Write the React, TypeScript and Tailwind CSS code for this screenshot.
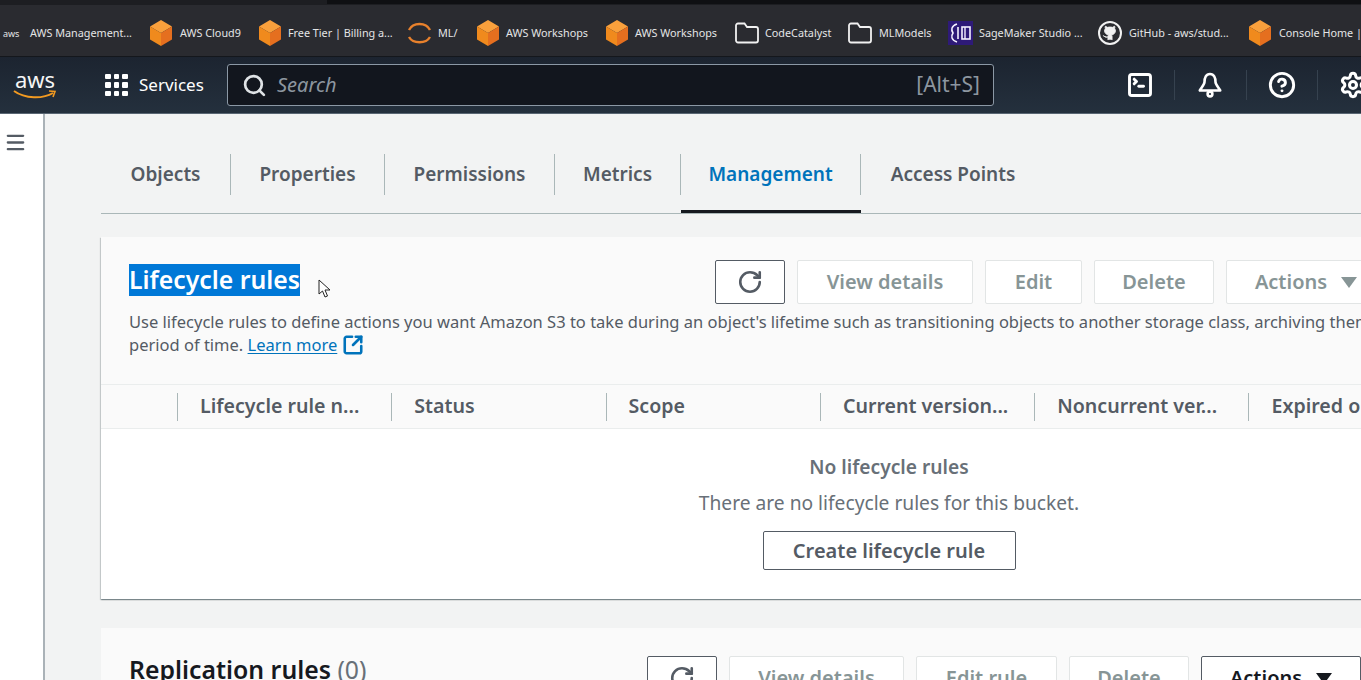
import { CircleHelp, Github, Menu, RotateCw, Search, Settings, SquareArrowOutUpRight, SquareTerminal } from "lucide-react";

function Cube() {
  return (
    <svg width="24" height="26" viewBox="0 0 24 26" className="shrink-0">
      <path d="M12 0 L23 6.5 L12 13 L1 6.5 Z" fill="#f9a03c" />
      <path d="M1 6.5 L12 13 L12 26 L1 19.5 Z" fill="#f08a1d" />
      <path d="M23 6.5 L12 13 L12 26 L23 19.5 Z" fill="#e56f1f" />
    </svg>
  );
}

function Folder() {
  return (
    <svg width="24" height="22" viewBox="0 0 24 22" fill="none" stroke="#f1f1f1" strokeWidth="1.8" className="shrink-0">
      <path d="M3 1.5 H9.5 L12 5 H21 A2 2 0 0 1 23 7 V18.5 A2 2 0 0 1 21 20.5 H3 A2 2 0 0 1 1 18.5 V3.5 A2 2 0 0 1 3 1.5 Z" />
    </svg>
  );
}

function MlArc() {
  return (
    <svg width="25" height="24" viewBox="0 0 25 24" fill="none" stroke="#e8812c" strokeWidth="2.4" className="shrink-0">
      <path d="M2 9 C6 1 19 1 23 9" />
      <path d="M2 16 C6 23 19 23 23 16" />
    </svg>
  );
}

function SageMaker() {
  return (
    <svg width="25" height="24" viewBox="0 0 25 24" fill="none" className="shrink-0">
      <rect width="25" height="24" fill="#2e1a78" />
      <path d="M9 3 C3 5 3 9 5 12 C3 15 3 19 9 21" stroke="#f4f0ff" strokeWidth="1.6" />
      <path d="M10 6 V18" stroke="#f4f0ff" strokeWidth="1.6" />
      <rect x="14" y="6" width="8" height="12" stroke="#f4f0ff" strokeWidth="1.6" />
      <path d="M17 6 V18" stroke="#f4f0ff" strokeWidth="1.4" />
    </svg>
  );
}

function GitHubMark() {
  return (
    <span className="flex h-[24px] w-[24px] shrink-0 items-center justify-center rounded-full border-2 border-[#f1f1f1] text-[#f1f1f1]">
      <Github size={16} fill="currentColor" strokeWidth={1.5} />
    </span>
  );
}

function BellIcon() {
  return (
    <svg width="24" height="26" viewBox="0 0 24 26" fill="none" stroke="white" strokeWidth="2.6" className="ml-[23px] shrink-0">
      <path d="M12 2 C8 2 6.5 5.5 6.5 10 C6.5 12.5 3.5 15.5 1.8 18.5 H22.2 C20.5 15.5 17.5 12.5 17.5 10 C17.5 5.5 16 2 12 2 Z" strokeLinejoin="round" />
      <circle cx="12" cy="22" r="2.4" />
    </svg>
  );
}

function Bookmark({ icon, label, className }: { icon: React.ReactNode; label: string; className: string }) {
  return (
    <div className={`flex shrink-0 items-center ${className}`}>
      {icon}
      <span className="whitespace-nowrap text-[10.8px] text-[#e4e5e6]">{label}</span>
    </div>
  );
}

function BookmarkBar() {
  return (
    <div className="flex h-[52px] items-center overflow-hidden border-b border-[#14171c] bg-[#2a2b30] pl-[3px] pt-[5px]">
      <Bookmark
        className="w-[146px] gap-[11px]"
        label="AWS Management..."
        icon={<span className="w-[16px] shrink-0 text-[9px] leading-none text-[#e4e5e6]">aws</span>}
      />
      <Bookmark className="w-[109px] gap-[7px]" label="AWS Cloud9" icon={<Cube />} />
      <Bookmark className="w-[149px] gap-[6px]" label="Free Tier | Billing a..." icon={<Cube />} />
      <Bookmark className="w-[69px] gap-[6px]" label="ML/" icon={<MlArc />} />
      <Bookmark className="w-[129px] gap-[6px]" label="AWS Workshops" icon={<Cube />} />
      <Bookmark className="w-[130px] gap-[6px]" label="AWS Workshops" icon={<Cube />} />
      <Bookmark className="w-[113px] gap-[6px]" label="CodeCatalyst" icon={<Folder />} />
      <Bookmark className="w-[100px] gap-[7px]" label="MLModels" icon={<Folder />} />
      <Bookmark className="w-[150px] gap-[6px]" label="SageMaker Studio ..." icon={<SageMaker />} />
      <Bookmark className="w-[150px] gap-[7px]" label="GitHub - aws/stud..." icon={<GitHubMark />} />
      <Bookmark className="w-[120px] gap-[7px]" label="Console Home |" icon={<Cube />} />
    </div>
  );
}

function TopNav() {
  return (
    <div className="flex h-[57px] items-center border-b border-[#596673] bg-gradient-to-b from-[#1c2430] to-[#24303d] text-white">
      <div className="relative ml-[13px] flex h-[34px] w-[44px] shrink-0 flex-col items-center">
        <span className="text-[22px] leading-[22px] text-[#f5f5f5]">aws</span>
        <svg width="44" height="10" viewBox="0 0 44 10" fill="none" className="mt-[-1px]">
          <path d="M1 2 C12 10 30 10 40 4" stroke="#f29a21" strokeWidth="2" />
          <path d="M36 2 L42 2.5 L40 8" stroke="#f29a21" strokeWidth="1.6" />
        </svg>
      </div>
      <div className="ml-[24px] h-[34px] w-px bg-[#36424f]" />
      <div className="ml-[24px] grid w-[23px] shrink-0 grid-cols-3 gap-[3px]">
        {Array.from({ length: 9 }).map((_, i) => (
          <span key={i} className="h-[5.5px] w-[5.5px] rounded-[1px] bg-white" />
        ))}
      </div>
      <span className="ml-[11px] w-[88px] shrink-0 text-[17px]">Services</span>
      <div className="flex h-[42px] w-[767px] shrink-0 items-center rounded-[3px] border border-[#8b98a5] bg-[#12161e] pl-[14px] pr-[13px]">
        <Search size={25} strokeWidth={2.6} className="text-[#dfe3e6]" />
        <span className="ml-[10px] text-[20px] italic text-[#8d96a0]">Search</span>
        <span className="ml-auto text-[21px] text-[#8d96a0]">[Alt+S]</span>
      </div>
      <div className="ml-[132px] flex items-center">
        <SquareTerminal size={28} strokeWidth={2.5} />
        <div className="ml-[20px] h-[30px] w-px bg-[#36424f]" />
        <BellIcon />
        <div className="ml-[24px] h-[30px] w-px bg-[#36424f]" />
        <CircleHelp size={28} strokeWidth={2.5} className="ml-[21px]" />
        <div className="ml-[21px] h-[30px] w-px bg-[#36424f]" />
        <Settings size={28} strokeWidth={2.6} className="ml-[21px] shrink-0" />
      </div>
    </div>
  );
}

const tabs = [
  { label: "Objects", w: "w-[130px]" },
  { label: "Properties", w: "w-[154px]" },
  { label: "Permissions", w: "w-[170px]" },
  { label: "Metrics", w: "w-[126px]" },
  { label: "Management", w: "w-[180px]" },
  { label: "Access Points", w: "w-[184px]" },
];

function Tabs() {
  return (
    <div className="flex h-[100px] items-end border-b border-[#aab7b8]">
      {tabs.map((t, i) => (
        <div key={t.label} className={`flex h-[59px] items-start ${t.w} ${i === 4 ? "border-b-[3px] border-[#16191f]" : ""}`}>
          <div
            className={`flex h-[41px] w-full items-center justify-center whitespace-nowrap text-[19px] font-semibold ${
              i === 5 ? "" : "border-r border-[#aab7b8]"
            } ${i === 4 ? "text-[#0073bb]" : "text-[#545b64]"}`}
          >
            {t.label}
          </div>
        </div>
      ))}
    </div>
  );
}

function Btn({ label, w, dark, arrow }: { label: string; w: string; dark?: boolean; arrow?: boolean }) {
  return (
    <div
      className={`flex h-[44px] shrink-0 items-center justify-center gap-[14px] rounded-[2px] border bg-white text-[20px] font-semibold whitespace-nowrap ${w} ${
        dark ? "border-[#545b64] text-[#16191f]" : "border-[#e2e5e5] text-[#879596]"
      }`}
    >
      {label}
      {arrow && <span className={`h-0 w-0 border-x-[8px] border-t-[11px] border-x-transparent ${dark ? "border-t-[#16191f]" : "border-t-[#879596]"}`} />}
    </div>
  );
}

function RefreshBtn() {
  return (
    <div className="flex h-[44px] w-[70px] shrink-0 items-center justify-center rounded-[2px] border border-[#545b64] bg-white">
      <RotateCw size={26} strokeWidth={2.4} className="text-[#545b64]" />
    </div>
  );
}

const cols = ["Lifecycle rule n...", "Status", "Scope", "Current version...", "Noncurrent ver...", "Expired ob"];

function LifecycleCard() {
  return (
    <div className="w-[1400px] bg-white shadow-[0_1px_1px_0_rgba(0,28,36,0.3),1px_1px_1px_0_rgba(0,28,36,0.15),-1px_1px_1px_0_rgba(0,28,36,0.15)]">
      <div className="h-[148px] border-b border-[#eaeded] bg-[#fafafa] pl-[28px] pt-[23px]">
        <div className="flex items-start">
          <div className="relative mt-[4px] w-[586px] shrink-0">
            <span className="inline-block h-[32px] bg-[#0078d7] text-[24.8px] font-semibold leading-[31px] text-white">Lifecycle rules</span>
            <svg width="14" height="20" viewBox="0 0 14 20" className="absolute left-[189px] top-[15px]">
              <path d="M1 1 L1 15 L4.5 12 L7 18 L9.5 17 L7 11 L12 11 Z" fill="#fff" stroke="#222" strokeWidth="1" />
            </svg>
          </div>
          <div className="flex gap-[12px]">
            <RefreshBtn />
            <Btn label="View details" w="w-[176px]" />
            <Btn label="Edit" w="w-[97px]" />
            <Btn label="Delete" w="w-[120px]" />
            <Btn label="Actions" w="w-[160px]" arrow />
          </div>
        </div>
        <p className="mt-[6px] whitespace-nowrap text-[16.5px] leading-[23px] text-[#545b64]">
          Use lifecycle rules to define actions you want Amazon S3 to take during an object's lifetime such as transitioning objects to another storage class, archiving them
          <br />
          period of time.{" "}
          <span className="inline-flex items-center gap-[5px] text-[#0073bb]">
            <span className="underline underline-offset-2">Learn more</span>
            <SquareArrowOutUpRight size={22} strokeWidth={2.8} />
          </span>
        </p>
      </div>
      <div className="flex h-[44px] items-center border-b border-[#eaeded] bg-[#fafafa] pl-[76px]">
        {cols.map((c) => (
          <div key={c} className="flex h-[28px] w-[214.3px] shrink-0 items-center whitespace-nowrap border-l border-[#aab7b8] pb-[2px] pl-[22px] text-[19.6px] font-semibold text-[#545b64]">
            {c}
          </div>
        ))}
      </div>
      <div className="flex h-[170px] w-[1361px] flex-col items-center pl-[215px] pt-[25px]">
        <div className="text-[19.2px] font-semibold leading-[26px] text-[#687078]">No lifecycle rules</div>
        <div className="mt-[10px] text-[19.2px] leading-[26px] text-[#687078]">There are no lifecycle rules for this bucket.</div>
        <div className="mt-[15px] flex h-[39px] w-[253px] items-center justify-center rounded-[2px] border border-[#545b64] bg-white text-[20px] font-semibold text-[#545b64]">
          Create lifecycle rule
        </div>
      </div>
    </div>
  );
}

function ReplicationCard() {
  return (
    <div className="mt-[29px] flex h-[100px] w-[1400px] items-start bg-[#fafafa] pl-[28px] pt-[28px]">
      <div className="mt-[-3px] w-[518px] shrink-0 whitespace-nowrap text-[24.8px] font-semibold leading-[32px] text-[#16191f]">
        Replication rules <span className="font-normal text-[#687078]">(0)</span>
      </div>
      <div className="flex gap-[12px]">
        <RefreshBtn />
        <Btn label="View details" w="w-[175px]" />
        <Btn label="Edit rule" w="w-[141px]" />
        <Btn label="Delete" w="w-[120px]" />
        <Btn label="Actions" w="w-[160px]" dark arrow />
      </div>
    </div>
  );
}

export default function App() {
  return (
    <div className="h-[680px] w-[1361px] overflow-hidden bg-[#f2f3f3] font-['Noto_Sans',sans-serif]">
      <div className="relative h-[5px] bg-[#1d1e22]">
        <div className="absolute left-[327px] right-0 top-0 h-[4px] bg-[#0f1013]" />
      </div>
      <BookmarkBar />
      <TopNav />
      <div className="flex h-[566px]">
        <div className="w-[45px] shrink-0 border-r-2 border-[#aab2b7] bg-white pl-[4px] pt-[17px]">
          <Menu size={23} strokeWidth={2.4} className="text-[#545b64]" />
        </div>
        <div className="min-w-0 flex-1 overflow-hidden pl-[56px]">
          <div className="w-[1400px]">
            <Tabs />
          </div>
          <div className="mt-[23px]">
            <LifecycleCard />
            <ReplicationCard />
          </div>
        </div>
      </div>
    </div>
  );
}
